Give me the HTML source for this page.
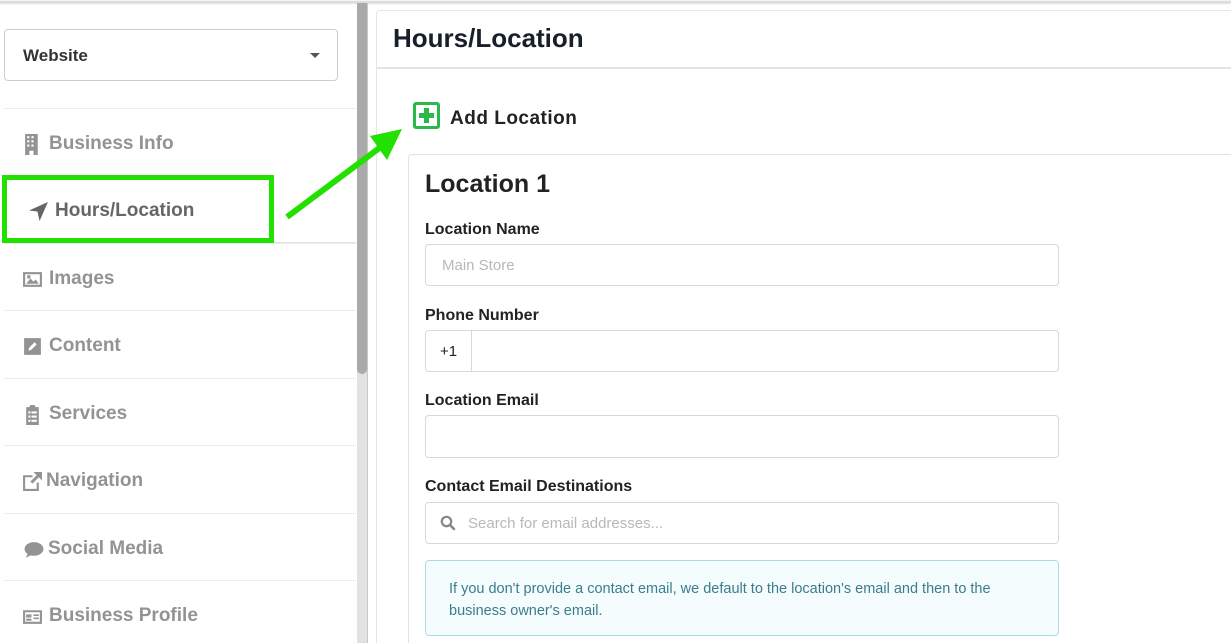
<!DOCTYPE html>
<html><head><style>
*{box-sizing:border-box;margin:0;padding:0}
html,body{width:1231px;height:643px;overflow:hidden}
body{background:#fff;font-family:"Liberation Sans",sans-serif;position:relative}
.abs{position:absolute}
.topbar{left:0;top:0;width:1231px;height:5px;background:linear-gradient(#fff 0,#d4d4d4 2px,#eee 4px,#fff 5px)}
.dd{left:4px;top:29px;width:334px;height:52px;border:1px solid #ccc;border-radius:4px}
.dd span{position:absolute;left:18px;top:16px;font-weight:bold;font-size:17px;color:#333}
.dd i{position:absolute;right:17px;top:23px;border-left:5px solid transparent;border-right:5px solid transparent;border-top:5px solid #555}
.sep{left:4px;width:352px;height:1px;background:#ececec}
.item{left:22px;font-weight:bold;font-size:19px;color:#939393;display:flex;align-items:center;gap:6px;height:24px}
.item svg{width:21px;height:21px;fill:#939393}
.track{left:357px;top:3px;width:11px;height:640px;background:#e2e2e2;border-right:1px solid #c8c8c8}
.thumb{left:357px;top:3px;width:10px;height:371px;background:#aaa;border-radius:0 0 5px 5px}
.panel{left:376px;top:10px;width:870px;height:640px;border:1px solid #e6e6e6;border-radius:4px}
.lbl{left:425px;font-weight:bold;font-size:16px;color:#222}
.inp{left:425px;width:634px;height:42px;border:1px solid #d8d8d8;border-radius:4px}
</style></head><body>
<div class="abs topbar"></div>
<div class="abs dd"><span>Website</span><i></i></div>
<div class="abs sep" style="top:108px"></div>
<div class="abs sep" style="top:310px"></div>
<div class="abs sep" style="top:378px"></div>
<div class="abs sep" style="top:445px"></div>
<div class="abs sep" style="top:513px"></div>
<div class="abs sep" style="top:580px"></div>
<div class="abs" style="left:4px;top:242px;width:352px;height:2px;background:linear-gradient(#ddd,#f4f4f4)"></div>

<div class="abs item" style="top:132px"><svg viewBox="0 0 20 20"><path d="M3 0h12v20h-4v-4h-4v4H3z M5 2v2h2V2z M9 2v2h2V2z M5 6v2h2V6z M9 6v2h2V6z M5 10v2h2v-2z M9 10v2h2v-2z" fill-rule="evenodd"/></svg>Business Info</div>
<div class="abs item" style="top:199px;left:28px;color:#666"><svg viewBox="0 0 20 20" style="fill:#666"><path d="M19 1L1 9l8 1 2 9z"/></svg>Hours/Location</div>
<div class="abs item" style="top:267px"><svg viewBox="0 0 20 20"><path d="M1 3h18v14H1z M3 5v10h14V5z M4 14l4-5 3 3 2-2 3 4z M5 6h3v3H5z" fill-rule="evenodd"/></svg>Images</div>
<div class="abs item" style="top:334px"><svg viewBox="0 0 20 20"><path d="M2 2h16v16H2z M6 14l1-3 5-5 2 2-5 5z" fill-rule="evenodd"/></svg>Content</div>
<div class="abs item" style="top:402px"><svg viewBox="0 0 20 20"><path d="M4 3h3l1-2h4l1 2h3v17H4z M6 7v2h2V7z M9 7v2h5V7z M6 11v2h2v-2z M9 11v2h5v-2z M6 15v2h2v-2z M9 15v2h5v-2z" fill-rule="evenodd"/></svg>Services</div>
<div class="abs item" style="top:469px;gap:3px"><svg viewBox="0 0 20 20"><path d="M1 4h9v2H3v11h11v-6h2v8H1z M11 1h8v8l-3-3-6 6-2-2 6-6z"/></svg>Navigation</div>
<div class="abs item" style="top:537px;gap:2px"><svg viewBox="0 0 20 20" style="width:24px"><path d="M10 3c5 0 9 3 9 6.5S15 16 10 16c-1 0-2 0-3-.4L2 18l2-3.5C2 13 1 11.3 1 9.5 1 6 5 3 10 3z"/></svg>Social Media</div>
<div class="abs item" style="top:604px"><svg viewBox="0 0 20 20"><path d="M1 4h18v13H1z M3 6v9h14V6z M4 8h5v3H4z M4 12h5v2H4z M11 8h5v1.5h-5z M11 11h5v1.5h-5z" fill-rule="evenodd"/></svg>Business Profile</div>

<div class="abs track"></div>
<div class="abs thumb"></div>

<div class="abs panel"></div>
<div class="abs" style="left:393px;top:23px;font-weight:bold;font-size:26px;color:#17202a">Hours/Location</div>
<div class="abs" style="left:377px;top:67px;width:860px;height:2px;background:#e4e4e4"></div>
<div class="abs" style="left:413px;top:102px;width:27px;height:27px;border:3px solid #2ab84a;border-radius:3px"></div>
<div class="abs" style="left:419px;top:113px;width:15px;height:5px;background:#2ab84a"></div>
<div class="abs" style="left:424px;top:108px;width:5px;height:15px;background:#2ab84a"></div>
<div class="abs" style="left:450px;top:108px;font-weight:bold;font-size:19px;color:#222;letter-spacing:.5px">Add Location</div>

<div class="abs" style="left:408px;top:154px;width:840px;height:500px;border:1px solid #e2e2e2;border-radius:4px"></div>
<div class="abs" style="left:425px;top:170px;font-weight:bold;font-size:25px;color:#222">Location 1</div>
<div class="abs lbl" style="top:221px">Location Name</div>
<div class="abs inp" style="top:244px"><span style="position:absolute;left:16px;top:12px;font-size:15px;color:#b8b8b8">Main Store</span></div>
<div class="abs lbl" style="top:307px">Phone Number</div>
<div class="abs inp" style="top:330px"><span style="position:absolute;left:0;top:0;width:46px;height:40px;border-right:1px solid #d8d8d8;font-size:15px;color:#222;line-height:42px;text-align:center">+1</span></div>
<div class="abs lbl" style="top:392px">Location Email</div>
<div class="abs inp" style="top:415px;height:43px"></div>
<div class="abs lbl" style="top:478px">Contact Email Destinations</div>
<div class="abs inp" style="top:502px"><svg style="position:absolute;left:14px;top:12px" width="16" height="16" viewBox="0 0 16 16"><circle cx="6.5" cy="6.5" r="4.7" fill="none" stroke="#888" stroke-width="2.2"/><path d="M10 10l4 4" stroke="#888" stroke-width="2.6" stroke-linecap="round"/></svg><span style="position:absolute;left:42px;top:12px;font-size:15px;color:#b8b8b8">Search for email addresses...</span></div>
<div class="abs" style="left:425px;top:560px;width:634px;height:76px;background:#f4fcfd;border:1px solid #a9dde5;border-radius:4px;padding:17px 22px 0 23px;font-size:14.5px;line-height:22px;color:#3a7d8c">If you don't provide a contact email, we default to the location's email and then to the business owner's email.</div>

<div class="abs" style="left:2px;top:175px;width:272px;height:68px;border:5px solid #22e000"></div>
<svg class="abs" style="left:0;top:0" width="1231" height="643"><line x1="287" y1="217" x2="382" y2="146" stroke="#22e000" stroke-width="6"/><polygon points="402,129 370,136 387,160" fill="#22e000"/></svg>
</body></html>
